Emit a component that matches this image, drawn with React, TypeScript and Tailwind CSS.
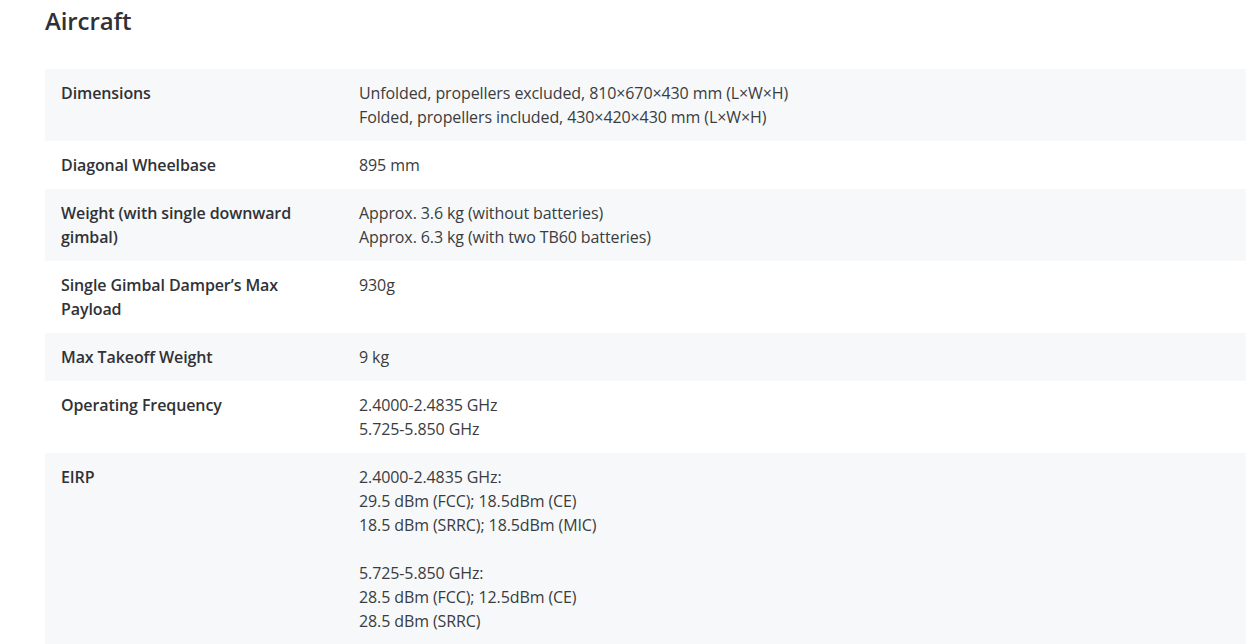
import React from 'react';

const specs: { label: string; value: string[] }[] = [
  {
    label: 'Dimensions',
    value: [
      'Unfolded, propellers excluded, 810×670×430 mm (L×W×H)',
      'Folded, propellers included, 430×420×430 mm (L×W×H)',
    ],
  },
  { label: 'Diagonal Wheelbase', value: ['895 mm'] },
  {
    label: 'Weight (with single downward gimbal)',
    value: ['Approx. 3.6 kg (without batteries)', 'Approx. 6.3 kg (with two TB60 batteries)'],
  },
  { label: 'Single Gimbal Damper’s Max Payload', value: ['930g'] },
  { label: 'Max Takeoff Weight', value: ['9 kg'] },
  { label: 'Operating Frequency', value: ['2.4000-2.4835 GHz', '5.725-5.850 GHz'] },
  {
    label: 'EIRP',
    value: [
      '2.4000-2.4835 GHz:',
      '29.5 dBm (FCC); 18.5dBm (CE)',
      '18.5 dBm (SRRC); 18.5dBm (MIC)',
      '',
      '5.725-5.850 GHz:',
      '28.5 dBm (FCC); 12.5dBm (CE)',
      '28.5 dBm (SRRC)',
      '',
    ],
  },
];

export default function App() {
  return (
    <div
      className="min-h-screen bg-white pl-[45px] tracking-[-0.1px] text-[#3a3c40]"
      style={{ fontFamily: '"Open Sans", "Noto Sans", sans-serif' }}
    >
      {/* titulo de la seccion */}
      <h2 className="pt-[5px] text-[24px] font-semibold leading-[32px] text-[#2f3135]">Aircraft</h2>

      <div className="mt-[32px]">
        {specs.map((row, i) => (
          <div key={row.label} className={`flex ${i % 2 === 0 ? 'bg-[#f7f8fa]' : 'bg-white'}`}>
            <div className="w-[298px] shrink-0 px-4 py-3 text-[16px] font-semibold leading-6 text-[#303236]">
              {row.label}
            </div>
            <div className="flex-1 px-4 py-3 text-[16px] leading-6">
              {row.value.map((line, j) => (
                <div key={j} className="h-6">
                  {line}
                </div>
              ))}
            </div>
          </div>
        ))}
      </div>
    </div>
  );
}
